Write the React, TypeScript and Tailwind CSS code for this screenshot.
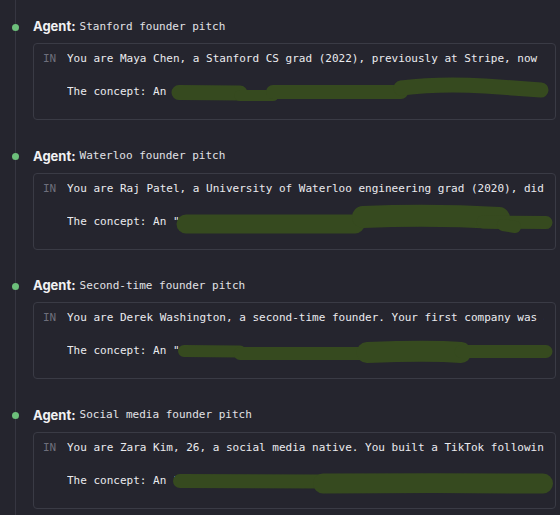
import React from "react";

const MONO = { fontFamily: '"DejaVu Sans Mono", "Liberation Mono", monospace' };
const SANS = { fontFamily: 'Inter, "Liberation Sans", sans-serif' };

type Stroke = { d: string; w: number };

type Item = {
  title: string;
  line1: string;
  line2: string;
  strokes: Stroke[];
};

const items: Item[] = [
  {
    title: "Stanford founder pitch",
    line1:
      "You are Maya Chen, a Stanford CS grad (2022), previously at Stripe, now building your first company.",
    line2: "The concept: An ",
    strokes: [
      { d: "M146,49.5 L207,50", w: 15 },
      { d: "M207,52.5 L240,52.5", w: 11 },
      { d: "M240,49 L368,49", w: 14 },
      { d: "M368,45 C392,42 420,41 452,43 L508,47", w: 15 },
    ],
  },
  {
    title: "Waterloo founder pitch",
    line1:
      "You are Raj Patel, a University of Waterloo engineering grad (2020), did two internships at Shopify.",
    line2: 'The concept: An "',
    strokes: [
      { d: "M153,51 L322,51", w: 19 },
      { d: "M330,44 C380,42 430,43 466,45", w: 22 },
      { d: "M450,49 L513,49.5", w: 13 },
      { d: "M470,52 L482,54", w: 12 },
    ],
  },
  {
    title: "Second-time founder pitch",
    line1:
      "You are Derek Washington, a second-time founder. Your first company was acquired in 2019.",
    line2: 'The concept: An "',
    strokes: [
      { d: "M151,49 L207,49.5", w: 12 },
      { d: "M207,51.5 L330,51.5", w: 13 },
      { d: "M334,50.5 C370,49 410,49 428,50.5", w: 21 },
      { d: "M428,49.5 L513,49.5", w: 13 },
    ],
  },
  {
    title: "Social media founder pitch",
    line1:
      "You are Zara Kim, 26, a social media native. You built a TikTok following of 2M before college.",
    line2: 'The concept: An "',
    strokes: [
      { d: "M147,49 L290,49.5", w: 14 },
      { d: "M290,51.5 C360,51 440,51 510,51.5", w: 20 },
    ],
  },
];

function Block({ item }: { item: Item }) {
  return (
    <div className="flex flex-col">
      <div className="relative flex h-5 items-center">
        <span className="absolute left-[-21.5px] top-[6.5px] h-[7px] w-[7px] rounded-full bg-[#6dbf7b]" />
        <span style={SANS} className="text-[13px] font-bold text-[#f2f2f4]">
          Agent:
        </span>
        <span style={MONO} className="ml-[4px] text-[11px] text-[#e2e2e6]">
          {item.title}
        </span>
      </div>
      <div className="relative mt-[6px] h-[77px] rounded-[4px] border border-[#3a3b45] pl-[9px] pr-[11px] pt-[7px]">
        <div style={MONO} className="flex text-[11px] leading-[16.5px]">
          <span className="w-[24px] shrink-0 text-[#6e6f7b]">IN</span>
          <div className="min-w-0 flex-1 overflow-hidden whitespace-pre text-[#ebebef]">
            <div>{item.line1}</div>
            <div>&nbsp;</div>
            <div>{item.line2}</div>
          </div>
        </div>
        <svg
          className="pointer-events-none absolute left-[-1px] top-[-1px]"
          width={523}
          height={77}
          viewBox="0 0 523 77"
        >
          {item.strokes.map((s, i) => (
            <path
              key={i}
              d={s.d}
              fill="none"
              stroke="#364a1f"
              strokeWidth={s.w}
              strokeLinecap="round"
              strokeLinejoin="round"
            />
          ))}
        </svg>
      </div>
    </div>
  );
}

export default function App() {
  return (
    <div className="h-[515px] w-[560px] overflow-hidden bg-[#25252e] pl-[15px]">
      <div className="flex h-full flex-col gap-[26.5px] border-l border-[#363641] pl-[17px] pr-[4px] pt-[17px]">
        {items.map((it) => (
          <Block key={it.title} item={it} />
        ))}
      </div>
    </div>
  );
}
